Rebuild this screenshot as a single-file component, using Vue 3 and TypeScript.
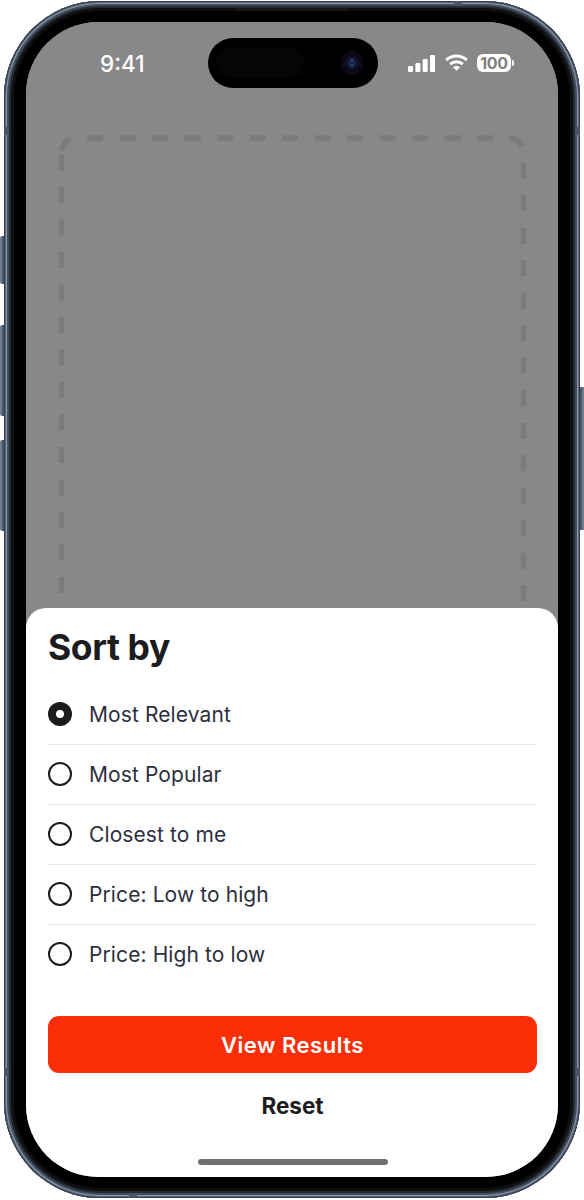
<template>
  <div class="page">
    <span class="side-btn left action"></span>
    <span class="side-btn left vol-up"></span>
    <span class="side-btn left vol-down"></span>
    <span class="side-btn right power"></span>

    <div class="device">
      <span class="speaker"></span>
      <span v-for="band in bands" :key="band" class="band" :class="band"></span>

      <div class="screen">
        <div class="backdrop">
          <div class="status-bar">
            <span class="time">9:41</span>
            <div class="island">
              <span class="island-sensor"></span>
              <svg class="lens" width="26" height="26" viewBox="0 0 26 26">
                <circle cx="13" cy="13" r="12" fill="#0a0812" />
                <circle cx="13" cy="13" r="7.5" fill="#0f1023" />
                <circle cx="13" cy="13" r="4.5" fill="#1a2148" />
                <circle cx="13" cy="10.5" r="1.2" fill="#3a4678" />
                <circle cx="13" cy="15.5" r="1.2" fill="#3a4678" />
              </svg>
            </div>
            <div class="status-icons">
              <svg width="27" height="17" viewBox="0 0 27 17" fill="#fff">
                <rect x="0" y="11" width="5" height="6" rx="1.3" />
                <rect x="7.4" y="8" width="5" height="9" rx="1.3" />
                <rect x="14.7" y="4" width="5" height="13" rx="1.3" />
                <rect x="22" y="0" width="5" height="17" rx="1.3" />
              </svg>
              <svg class="wifi" width="23" height="17" viewBox="0 0 23 17" fill="none" stroke="#fff" stroke-width="3">
                <path d="M1.2 6.2C7 .7 16 .7 21.8 6.2" />
                <path d="M5.2 10.2c3.6-3.3 9-3.3 12.6 0" />
                <path d="M11.5 16.8l-3.6-3.6c2.1-1.7 5.1-1.7 7.2 0z" fill="#fff" stroke="none" />
              </svg>
              <div class="battery">
                <span class="battery-level">100</span>
                <span class="battery-cap"></span>
              </div>
            </div>
          </div>
          <!-- left edge and top/right edge have different dash phases -->
          <svg class="placeholder" width="532" height="586" viewBox="0 0 532 586" fill="none">
            <path class="dash dash-left" d="M35.5 600V130" />
            <path class="dash dash-rest" d="M35.5 130a14 14 0 0 1 14-14H483.500a14 14 0 0 1 14 14V600" />
          </svg>
        </div>

        <section class="sheet">
          <h1 class="title">Sort by</h1>
          <ul class="options">
            <li v-for="(option, i) in options" :key="option" class="option">
              <span class="radio" :class="{ checked: i === selected }"></span>
              <span class="label">{{ option }}</span>
            </li>
          </ul>
          <button class="primary" type="button">View Results</button>
          <button class="reset" type="button">Reset</button>
          <span class="home-indicator"></span>
        </section>
      </div>
    </div>
  </div>
</template>

<script setup lang="ts">
const selected = 0

const options: string[] = [
  'Most Relevant',
  'Most Popular',
  'Closest to me',
  'Price: Low to high',
  'Price: High to low',
]

const bands: string[] = ['band-tl', 'band-tr', 'band-bl', 'band-br', 'band-top', 'band-bottom']
</script>

<style>
html,
body {
  margin: 0;
  background: #fff;
}
</style>

<style scoped>
.page {
  position: relative;
  width: 584px;
  height: 1200px;
  padding: 1px 4px 2px;
  box-sizing: border-box;
  font-family: Inter, 'Liberation Sans', sans-serif;
}

.side-btn {
  position: absolute;
  width: 5px;
  background: linear-gradient(90deg, #7d8a9e, #525e72 50%, #343d4c);
}
.side-btn.left {
  left: 0;
  border-radius: 2px 0 0 2px;
}
.side-btn.right {
  right: 0;
  border-radius: 0 2px 2px 0;
  transform: scaleX(-1);
}
.action {
  top: 236px;
  height: 48px;
}
.vol-up {
  top: 325px;
  height: 91px;
}
.vol-down {
  top: 440px;
  height: 91px;
}
.power {
  top: 387px;
  height: 143px;
}

.device {
  position: relative;
  height: 100%;
  padding: 21px 22px;
  box-sizing: border-box;
  border-radius: 96px;
  background: #000;
  box-shadow:
    inset 0 0 0 1px #333c4a,
    inset 0 0 0 2px #5c687b,
    inset 0 0 0 3px #8b98ab,
    inset 0 0 0 5px #424d5e,
    inset 0 0 0 7px #25282e,
    inset 0 0 0 10px #0e0f11;
}

.speaker {
  position: absolute;
  top: 7px;
  left: 230px;
  width: 116px;
  height: 3px;
  border-radius: 0 0 3px 3px;
  background: #14161b;
}

.band {
  position: absolute;
  background: #4a5364;
}
.band-tl,
.band-tr,
.band-bl,
.band-br {
  width: 5px;
  height: 8px;
}
.band-tl {
  top: 126px;
  left: 0;
}
.band-tr {
  top: 126px;
  right: 0;
}
.band-bl {
  top: 1067px;
  left: 0;
}
.band-br {
  top: 1067px;
  right: 0;
}
.band-top,
.band-bottom {
  width: 8px;
  height: 5px;
}
.band-top {
  top: 0;
  left: 450px;
}
.band-bottom {
  bottom: 0;
  left: 125px;
}

.screen {
  display: flex;
  flex-direction: column;
  height: 100%;
  overflow: hidden;
  border-radius: 72px;
  background: #888;
}

.backdrop {
  position: relative;
  height: 586px;
  overflow: hidden;
  flex: none;
  background: #888;
}

.status-bar {
  display: flex;
  align-items: center;
  height: 50px;
  margin-top: 16px;
  padding-left: 74px;
}

.time {
  width: 108px;
  font-size: 22.5px;
  font-weight: 500;
  color: #fff;
}

.island {
  display: flex;
  align-items: center;
  justify-content: space-between;
  width: 170px;
  height: 50px;
  padding: 0 13px 0 8px;
  box-sizing: border-box;
  border-radius: 25px;
  background: #000;
}

.island-sensor {
  width: 88px;
  height: 30px;
  border-radius: 15px;
  background: #050505;
}

.status-icons {
  display: flex;
  align-items: center;
  gap: 10px;
  margin-left: 30px;
}

.wifi {
  margin-top: -1px;
}

.battery {
  display: flex;
  align-items: center;
  gap: 1px;
  margin-left: -1px;
}

.battery-level {
  display: block;
  width: 34px;
  height: 18px;
  border-radius: 6px;
  background: #fff;
  color: #808080;
  font-size: 16px;
  font-weight: 700;
  line-height: 18px;
  text-align: center;
  letter-spacing: -0.4px;
}

.battery-cap {
  width: 2px;
  height: 6px;
  border-radius: 0 2px 2px 0;
  background: #fff;
}

.placeholder {
  position: absolute;
  top: 0;
  left: 0;
}

.dash {
  stroke: #7b7b7b;
  stroke-width: 5.5;
  stroke-dasharray: 16 16.5;
}
.dash-left {
  stroke-dashoffset: -29;
}
.dash-rest {
  stroke-dashoffset: -1;
}

.sheet {
  position: relative;
  display: flex;
  flex: 1;
  flex-direction: column;
  padding: 0 21px 0 22px;
  border-radius: 20px 20px 0 0;
  background: #fff;
}

.title {
  margin: 20px 0 17px;
  font-size: 35.5px;
  font-weight: 700;
  line-height: 40px;
  letter-spacing: -0.4px;
  color: #1c1c1e;
}

.options {
  margin: 0;
  padding: 0;
  list-style: none;
}

.option {
  display: flex;
  align-items: center;
  gap: 17px;
  height: 59px;
  border-bottom: 1px solid #e6e6e8;
}
.option:last-child {
  border-bottom-color: transparent;
}

.radio {
  width: 24px;
  height: 24px;
  margin-top: -1px;
  box-sizing: border-box;
  flex: none;
  border: 2.75px solid #1c1c1e;
  border-radius: 50%;
  background: #fff;
}
.radio.checked {
  border-width: 8px;
}

.label {
  font-size: 21px;
  line-height: 30px;
  letter-spacing: 0.1px;
  color: #2d2f3e;
}

.primary {
  height: 57px;
  margin-top: 31px;
  padding: 0;
  border: 0;
  border-radius: 11px;
  background: #fb2e07;
  color: #fff;
  font-family: inherit;
  font-size: 22px;
  font-weight: 600;
  letter-spacing: 0.5px;
}

.reset {
  height: 30px;
  margin-top: 17px;
  padding: 0;
  border: 0;
  background: none;
  color: #1c1c1e;
  font-family: inherit;
  font-size: 22.5px;
  font-weight: 700;
}

.home-indicator {
  position: absolute;
  left: 172px;
  bottom: 12px;
  width: 190px;
  height: 6px;
  border-radius: 3px;
  background: #6e6e6e;
}
</style>
